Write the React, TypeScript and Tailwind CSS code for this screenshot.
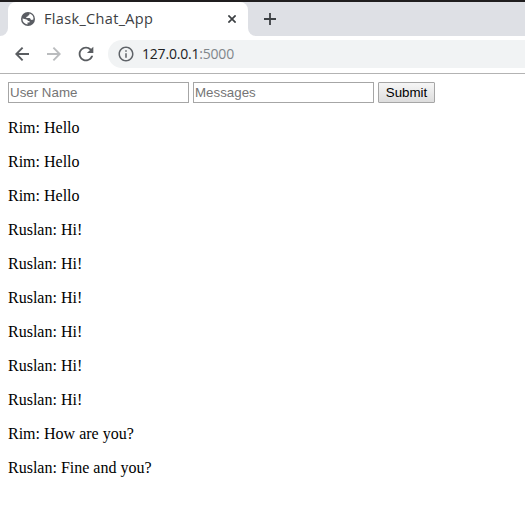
import React from "react";
import { MdInfoOutline, MdRefresh } from "react-icons/md";

const messages = [
  { user: "Rim", text: "Hello" },
  { user: "Rim", text: "Hello" },
  { user: "Rim", text: "Hello" },
  { user: "Ruslan", text: "Hi!" },
  { user: "Ruslan", text: "Hi!" },
  { user: "Ruslan", text: "Hi!" },
  { user: "Ruslan", text: "Hi!" },
  { user: "Ruslan", text: "Hi!" },
  { user: "Ruslan", text: "Hi!" },
  { user: "Rim", text: "How are you?" },
  { user: "Ruslan", text: "Fine and you?" },
];

function GlobeIcon() {
  return (
    <svg width="14" height="14" viewBox="0 0 14 14" className="shrink-0">
      <circle cx="7" cy="7" r="7" fill="#5a5d63" />
      <path
        d="M8.6 1.6 L8.2 2.9 Q8 3.6 7 3.6 L6.6 4.4 L5.2 5 L5.4 6.1 H8.4 Q9.4 6.2 9.5 7.3 L10.6 8 L12.4 7.6 A5.5 5.5 0 0 0 8.6 1.6 Z M1.5 6.6 L4.6 7.3 Q6.6 7.5 7 9 H8.5 V10.6 H6.5 V12.5 A5.5 5.5 0 0 1 1.5 6.6 Z"
        fill="#fff"
      />
    </svg>
  );
}

function ArrowIcon({ className }: { className: string }) {
  return (
    <svg
      width="14"
      height="14"
      viewBox="0 0 14 14"
      fill="none"
      stroke="currentColor"
      strokeWidth="1.9"
      className={className}
    >
      <path d="M14 7H1.5M7.6 0.7L1.3 7l6.3 6.3" />
    </svg>
  );
}

function TabStrip() {
  return (
    <div className="flex h-[36px] border-t-2 border-[#1f1d1e] bg-white">
      <div className="w-[8px] shrink-0 rounded-br-[8px] bg-[#dee0e5]" />
      <div className="w-[240px] shrink-0 bg-[#dee0e5]">
        <div className="flex h-[34px] items-center rounded-t-[8px] bg-white pl-[13px] pr-[12px]">
          <GlobeIcon />
          <span className="ml-[9px] flex-1 whitespace-nowrap font-['Open_Sans','Noto_Sans',sans-serif] text-[14.5px] leading-[20px] tracking-[0.33px] text-[#3c4043]">
            Flask_Chat_App
          </span>
          <svg
            width="8"
            height="8"
            viewBox="0 0 8 8"
            stroke="#3c4043"
            strokeWidth="1.7"
            className="shrink-0"
          >
            <path d="M0.4 0.4l7.2 7.2M7.6 0.4L0.4 7.6" />
          </svg>
        </div>
      </div>
      <div className="flex flex-1 items-center rounded-bl-[8px] bg-[#dee0e5] pl-[16px]">
        <svg
          width="12"
          height="12"
          viewBox="0 0 12 12"
          stroke="#3c4043"
          strokeWidth="1.8"
        >
          <path d="M6 0v12M0 6h12" />
        </svg>
      </div>
    </div>
  );
}

function Toolbar() {
  return (
    <div className="flex h-[38px] items-center border-b border-[#b3b3b3] bg-white pb-px pl-[15px]">
      <ArrowIcon className="text-[#5a5d61]" />
      <ArrowIcon className="ml-[18px] rotate-180 text-[#babcbe]" />
      <MdRefresh size={22} className="ml-[14px] text-[#5a5d61]" />
      <div className="ml-[11px] flex h-[28px] flex-1 items-center rounded-l-full bg-[#f1f3f4] pl-[9px]">
        <MdInfoOutline size={18} className="text-[#5f6368]" />
        <span className="ml-[7px] font-['Open_Sans','Noto_Sans',sans-serif] text-[14px] leading-[20px] tracking-[-0.2px] text-[#202124]">
          127.0.0.1<span className="text-[#80868b]">:5000</span>
        </span>
      </div>
    </div>
  );
}

const inputClass =
  "h-[21px] w-[181px] border border-[#a6a6a6] bg-white px-px font-['Liberation_Sans',Arial,sans-serif] text-[13.333px] leading-[15px] text-black outline-none placeholder:text-[#757575]";

export default function App() {
  return (
    <div className="h-[524px] w-[525px] overflow-hidden bg-white">
      <TabStrip />
      <Toolbar />
      <main className="px-[8px] pt-[8px] font-['Liberation_Serif','Times_New_Roman',serif] text-[16px] leading-[18px] text-black">
        <form className="flex gap-[4px]" onSubmit={(e) => e.preventDefault()}>
          <input className={inputClass} placeholder="User Name" />
          <input className={inputClass} placeholder="Messages" />
          <button className="h-[21px] w-[57px] rounded-[1px] border border-[#a6a6a6] bg-linear-to-b from-[#f6f6f6] to-[#dddddd] font-['Liberation_Sans',Arial,sans-serif] text-[13.333px] leading-[15px]">
            Submit
          </button>
        </form>
        <div className="mt-[16px] flex flex-col gap-[16px]">
          {messages.map((m, i) => (
            <p key={i}>
              {m.user}: {m.text}
            </p>
          ))}
        </div>
      </main>
    </div>
  );
}
